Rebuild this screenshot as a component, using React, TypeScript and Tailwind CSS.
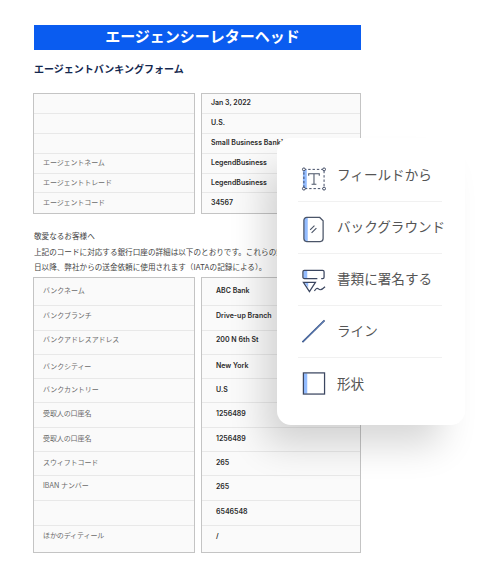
const cjk = "font-['Inter','Noto_Sans_CJK_JP',sans-serif]";

type Row = { h: string; label?: string; value?: string; labelClass?: string; rowClass?: string };

const TOP_ROWS: Row[] = [
  { h: "h-[20px]", value: "Jan 3, 2022" },
  { h: "h-[20px]", value: "U.S." },
  { h: "h-[20px]", value: "Small Business Bank¹" },
  { h: "h-[20px]", label: "エージェントネーム", value: "LegendBusiness" },
  { h: "h-[19px]", label: "エージェントトレード", value: "LegendBusiness" },
  { h: "h-[20px]", label: "エージェントコード", value: "34567" },
];

const BANK_ROWS: Row[] = [
  { h: "h-[28px]", label: "バンクネーム", value: "ABC Bank" },
  { h: "h-[25px]", label: "バンクブランチ", value: "Drive-up Branch", rowClass: "pb-[3px]" },
  { h: "h-[24px]", label: "バンクアドレスアドレス", value: "200 N 6th St", rowClass: "pb-[3px]" },
  { h: "h-[24px]", label: "バンクシティー", value: "New York", labelClass: "pt-[3px]" },
  { h: "h-[24px]", label: "バンクカントリー", value: "U.S" },
  { h: "h-[25px]", label: "受取人の口座名", value: "1256489" },
  { h: "h-[24px]", label: "受取人の口座名", value: "1256489" },
  { h: "h-[24px]", label: "スウィフトコード", value: "265", labelClass: "pl-[2px]" },
  { h: "h-[25px]", label: "IBAN ナンバー", value: "265", labelClass: "pl-[2px] pb-[3px]" },
  { h: "h-[25px]", value: "6546548" },
  { h: "h-[26px]", label: "ほかのディティール", value: "/", rowClass: "pb-[5px]" },
];

function Table({ rows, field, pad }: { rows: Row[]; field: "label" | "value"; pad: string }) {
  return (
    <div className="border border-[#c4c4c4] bg-[#fafafa]">
      {rows.map((r, i) => (
        <div
          key={i}
          className={`${r.h} flex items-center ${pad} ${r.rowClass ?? ""} ${i < rows.length - 1 ? "border-b border-[#e8e8e8]" : ""} ${
            field === "label"
              ? `text-[7px] tracking-[-0.1px] text-[#6a6a6a] ${r.labelClass ?? ""}`
              : "text-[7px] font-semibold text-[#2a2a2a]"
          }`}
        >
          <span className="whitespace-nowrap">{r[field]}</span>
        </div>
      ))}
    </div>
  );
}

function FieldIcon() {
  return (
    <svg width="26" height="26" viewBox="0 0 26 26" fill="none">
      <rect x="2" y="3" width="4" height="20" fill="#93bcff" />
      <rect x="3" y="3" width="21" height="20" stroke="#3b4660" strokeWidth="1" strokeDasharray="2.5 2" />
      <circle cx="3" cy="3" r="1.5" fill="#fff" stroke="#3b4660" />
      <circle cx="24" cy="3" r="1.5" fill="#fff" stroke="#3b4660" />
      <circle cx="3" cy="23" r="1.5" fill="#fff" stroke="#3b4660" />
      <circle cx="24" cy="23" r="1.5" fill="#fff" stroke="#3b4660" />
      <path d="M8 9.5V7.5H19V9.5M13.5 7.5V18.5M11 18.5H16" stroke="#4b5568" strokeWidth="1.1" />
    </svg>
  );
}

function BackgroundIcon() {
  return (
    <svg width="26" height="28" viewBox="0 0 26 28" fill="none">
      <path d="M3 5A3 3 0 0 1 6 2H7V27H6A3 3 0 0 1 3 24Z" fill="#93bcff" />
      <path
        d="M6 2H19.5L23 5.5V24A3 3 0 0 1 20 27H6A3 3 0 0 1 3 24V5A3 3 0 0 1 6 2Z"
        stroke="#4b5568"
        strokeWidth="1.3"
      />
      <path d="M9.5 15L14 10.5M11 18L16 13" stroke="#4b5568" strokeWidth="1.2" />
    </svg>
  );
}

function SignIcon() {
  return (
    <svg width="26" height="26" viewBox="0 0 26 26" fill="none">
      <rect x="2.5" y="2.5" width="4" height="7.5" fill="#93bcff" />
      <path d="M17 10.5H3.5A1.5 1.5 0 0 1 2 9V3.5A1.5 1.5 0 0 1 3.5 2H22.5A1.5 1.5 0 0 1 24 3.5V9A1.5 1.5 0 0 1 22.5 10.5H21" stroke="#3b4660" strokeWidth="1.3" />
      <path d="M4 15H7.5V20Z" fill="#93bcff" />
      <path d="M2.5 14.5H15L8.8 24Z" stroke="#3b4660" strokeWidth="1.3" />
      <path d="M14 23.5C15.5 20.5 17 20 18.5 21.5C20 23 21.5 22.5 25 19" stroke="#3b4660" strokeWidth="1.2" />
    </svg>
  );
}

function LineIcon() {
  return (
    <svg width="26" height="26" viewBox="0 0 26 26" fill="none">
      <path d="M1.5 24.5L24.5 2" stroke="#2f4a7d" strokeWidth="1.7" />
      <path d="M2 24L24 2.5" stroke="#93bcff" strokeWidth="0.5" />
    </svg>
  );
}

function ShapeIcon() {
  return (
    <svg width="26" height="26" viewBox="0 0 26 26" fill="none">
      <rect x="3" y="3" width="3.5" height="21" fill="#93bcff" />
      <rect x="2.5" y="2.5" width="22" height="22" stroke="#3b4660" strokeWidth="1.3" />
    </svg>
  );
}

const MENU = [
  { label: "フィールドから", icon: <FieldIcon />, iconClass: "mt-[6px]" },
  { label: "バックグラウンド", icon: <BackgroundIcon />, iconClass: "mt-[3px]" },
  { label: "書類に署名する", icon: <SignIcon />, iconClass: "mt-[3px]" },
  { label: "ライン", icon: <LineIcon />, iconClass: "mb-[2px]" },
  { label: "形状", icon: <ShapeIcon />, iconClass: "mb-[3px]" },
];

export default function App() {
  return (
    <div className={`relative h-[572px] w-[493px] overflow-hidden bg-white ${cjk}`}>
      <div className="ml-[33px] w-[328px] pt-[25px]">
        <div className="ml-px flex h-[25px] items-center justify-center bg-[#0a5cf0] pl-[10px] text-[15px] font-semibold text-white">
          エージェンシーレターヘッド
        </div>
        <div className="mt-[12px] ml-px text-[10px] leading-[14px] font-bold text-[#14284f]">
          エージェントバンキングフォーム
        </div>

        <div className="mt-[17px] grid grid-cols-[162px_160px] gap-x-[6px]">
          <Table rows={TOP_ROWS} field="label" pad="pl-[9px]" />
          <Table rows={TOP_ROWS} field="value" pad="pl-[9px]" />
        </div>

        <div className="mt-[15px] ml-px text-[7.6px] leading-[15.5px] whitespace-nowrap text-[#444]">
          <p>敬愛なるお客様へ</p>
          <p>上記のコードに対応する銀行口座の詳細は以下のとおりです。これらの銀行口座は</p>
          <p>日以降、弊社からの送金依頼に使用されます（IATAの記録による）。</p>
        </div>

        <div className="mt-[1px] grid grid-cols-[162px_160px] gap-x-[6px]">
          <Table rows={BANK_ROWS} field="label" pad="pl-[9px]" />
          <Table rows={BANK_ROWS} field="value" pad="pl-[14px]" />
        </div>
      </div>

      <div className="absolute top-[138px] left-[277px] w-[188px] rounded-[14px] bg-white pt-[12px] pr-[23px] pb-[15px] pl-[21px] shadow-[-18px_26px_36px_-6px_rgba(0,0,0,0.16)]">
        {MENU.map((m, i) => (
          <div
            key={m.label}
            className={`flex h-[52px] items-center gap-[11px] ${i < MENU.length - 1 ? "border-b border-[#f1f1f1]" : ""}`}
          >
            <span className={`flex w-[28px] shrink-0 justify-start pl-[3px] ${m.iconClass}`}>{m.icon}</span>
            <span className="text-[13.6px] whitespace-nowrap text-[#555]">{m.label}</span>
          </div>
        ))}
      </div>
    </div>
  );
}
